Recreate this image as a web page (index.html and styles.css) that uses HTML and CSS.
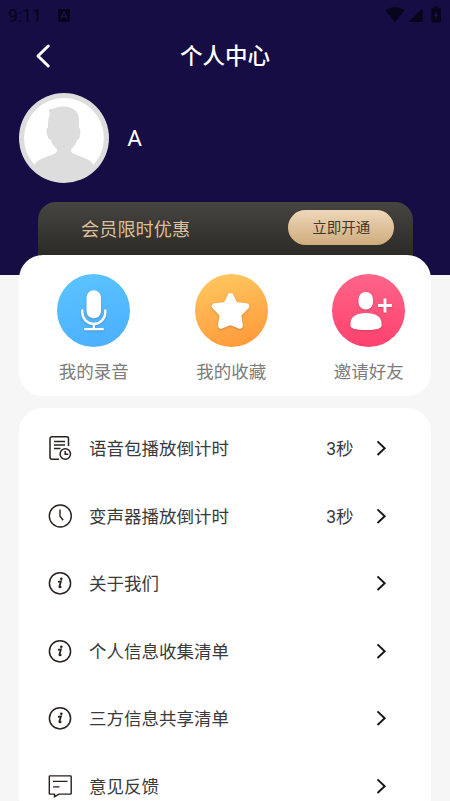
FILE: index.html
```html
<!DOCTYPE html>
<html lang="zh-CN">
<head>
<meta charset="utf-8">
<meta name="viewport" content="width=device-width, initial-scale=1">
<title>个人中心</title>
<link rel="stylesheet" href="styles.css">
</head>
<body>
<svg class="defs" width="0" height="0" aria-hidden="true">
  <defs>
    <symbol id="chevron" viewBox="0 0 12 18"><path d="M1.500 2.400 8.700 9.200l-7.200 6.800" fill="none" stroke="#161616" stroke-width="1.900"/></symbol>
    <symbol id="info" viewBox="0 0 24 24">
      <g fill="none" stroke="#2b2020"><circle cx="12" cy="12.300" r="10.600" stroke-width="1.500"/>
      <path d="M10 10.900l2.900-.5-1.500 5.100c-.2 1.200.7 1 1.900-.2" stroke-width="1.800"/></g>
      <circle cx="13.300" cy="7.700" r="1.300" fill="#2b2020"/>
    </symbol>
  </defs>
</svg>
<div class="screen">
  <header class="hero">
    <div class="status">
      <span class="time">9:11</span>
      <svg class="app-icon" width="12" height="13" viewBox="0 0 12 13"><rect width="12" height="13" rx="1" fill="#06051b"/><path d="M3 9.500 6 3l3 6.500M4 7.500h4" fill="none" stroke="#19124a" stroke-width="1.500"/></svg>
      <svg class="signals" width="58" height="18" viewBox="0 0 58 18" fill="#06051b">
        <path d="M.5 4.500C5.500 .2 14.500 .2 19.500 4.500L10 16z"/>
        <path d="M37.500 2.500V16H23.500z"/>
        <path d="M46.500 3.200q0-1 1-1h2V.5h3.400v1.700h2q1 0 1 1V15.500q0 1-1 1h-7.400q-1 0-1-1z"/>
        <path d="M52 4.500l-3.500 5.500h2.200l-.7 4 3.500-5.500h-2.200z" fill="#19124a"/>
      </svg>
    </div>
    <div class="navbar">
      <svg class="back" width="18" height="26" viewBox="0 0 18 26"><path d="M14.200 3 4 13l10.200 10" fill="none" stroke="#fff" stroke-width="3" stroke-linecap="round" stroke-linejoin="round"/></svg>
      <h1>个人中心</h1>
    </div>
    <div class="profile">
      <svg width="90" height="90" viewBox="0 0 90 90">
        <circle cx="45" cy="45" r="45" fill="#ddd"/>
        <circle cx="45" cy="45" r="40" fill="#fff"/>
        <path d="M31 20.500q-2-2-.5-4.500c4 .3 6-2.600 14-2.600C54.500 13.400 60 19 60 26.500V35q1.500.3 1.300 4c-.3 5-1.200 7.500-2.800 7.800-1.500 4-3.500 6.700-6.300 9.200v2.500C54 63 70 63.500 74.800 72L68 83.500 45 89 22 83.500 15.200 72C20 63.500 36 63 37.800 58.500V56c-2.800-2.500-4.800-5.200-6.300-9.200-1.600-.3-3.200-2.800-4-7.800-.4-3.500.6-4 1.500-4-.2-5 .2-10.500 2-14.500z" fill="#ddd"/>
      </svg>
      <span class="name">A</span>
    </div>
    <div class="vip">
      <span class="vip-text">会员限时优惠</span>
      <button class="vip-button" type="button">立即开通</button>
    </div>
  </header>
  <main>
    <section class="card shortcuts">
      <a class="shortcut">
        <span class="disc blue"><svg width="73" height="73" viewBox="0 0 73 73">
          <rect x="29.500" y="16.300" width="14.500" height="28" rx="7.250" fill="#fff"/>
          <path d="M25.300 36.500v2a11.500 11.500 0 0 0 23 0v-2M36.800 50v5M28 55.200h17.800" fill="none" stroke="#fff" stroke-width="2.300" stroke-linecap="round"/>
        </svg></span>
        <span class="label">我的录音</span>
      </a>
      <a class="shortcut">
        <span class="disc orange"><svg width="73" height="73" viewBox="0 0 73 73">
          <path d="M35.500 22 40 31 51.200 32.300 43.200 40.500 44.800 51.700 35.500 48 26 51.700 27.600 40.500 19.800 32.300 31 31z" fill="#fff" stroke="#fff" stroke-width="6" stroke-linejoin="round"/>
        </svg></span>
        <span class="label">我的收藏</span>
      </a>
      <a class="shortcut">
        <span class="disc pink"><svg width="73" height="73" viewBox="0 0 73 73" fill="#fff">
          <rect x="26.500" y="18" width="14.500" height="17.500" rx="7.200"/>
          <path d="M18.500 49.500c0-7 6-10.500 15.500-10.500S49.500 42.500 49.500 49.500v2c0 3-5 4.500-15.500 4.500s-15.500-1.500-15.500-4.500z"/>
          <path d="M46 31.500h14M53 24.500v14" stroke="#fff" stroke-width="2.900"/>
        </svg></span>
        <span class="label">邀请好友</span>
      </a>
    </section>
    <nav class="card menu">
      <a class="row">
        <svg class="icon" viewBox="0 0 24 24" fill="none" stroke="#2b2020" stroke-width="1.500">
          <path d="M11 23.200H4Q2 23.200 2 21.200V2.500Q2 .8 4 .8h14.500q2 0 2 1.700V10M6 5.500h11M6 9h11M6 12.500h6.500"/>
          <circle cx="17.300" cy="18" r="5.200"/><path d="M17.200 15v3.200h3"/>
        </svg>
        <span class="text">语音包播放倒计时</span><span class="value">3秒</span><svg class="chevron"><use href="#chevron"/></svg>
      </a>
      <a class="row">
        <svg class="icon" viewBox="0 0 24 24" fill="none" stroke="#2b2020" stroke-width="1.400"><circle cx="12.300" cy="12" r="11"/><path d="M12 5.500v6.800l3.200 4"/></svg>
        <span class="text">变声器播放倒计时</span><span class="value">3秒</span><svg class="chevron"><use href="#chevron"/></svg>
      </a>
      <a class="row">
        <svg class="icon"><use href="#info"/></svg>
        <span class="text">关于我们</span><svg class="chevron"><use href="#chevron"/></svg>
      </a>
      <a class="row">
        <svg class="icon"><use href="#info"/></svg>
        <span class="text">个人信息收集清单</span><svg class="chevron"><use href="#chevron"/></svg>
      </a>
      <a class="row">
        <svg class="icon"><use href="#info"/></svg>
        <span class="text">三方信息共享清单</span><svg class="chevron"><use href="#chevron"/></svg>
      </a>
      <a class="row">
        <svg class="icon" viewBox="0 0 24 24" fill="none" stroke="#2b2020" stroke-width="1.400"><path d="M2 1.900h20.500q.7 0 .7.700V19.400q0 .7-.7.700H11L6.500 22.700V20.100H2q-.7 0-.7-.7V2.600Q1.300 1.900 2 1.900zM5 7.400h14.500M5 12.900h6.500"/></svg>
        <span class="text">意见反馈</span><svg class="chevron"><use href="#chevron"/></svg>
      </a>
    </nav>
  </main>
</div>
</body>
</html>
```
FILE: styles.css
```css
* { box-sizing: border-box; }
body {
  margin: 0;
  background: #f6f6f6;
  font-family: Roboto, "Noto Sans CJK SC", sans-serif;
  color: #3a3a3a;
}
.defs { position: absolute; }
.screen { height: 801px; overflow: hidden; }
.hero { height: 275px; background: #150d43; }
.status { display: flex; align-items: center; height: 30px; padding: 0 7px 0 8px; }
.time { width: 50px; font-size: 17.500px; line-height: 30px; padding-top: 1px; color: #06051b; }
.signals { margin-left: auto; }
.navbar {
  display: grid;
  grid-template-columns: 36px 1fr 36px;
  align-items: center;
  height: 50px;
  padding: 0 34px;
}
h1 { margin: 0; padding-top: 1px; font-size: 22.500px; font-weight: 500; line-height: 50px; color: #fff; text-align: center; }
.profile { display: flex; align-items: center; gap: 18.500px; height: 90px; margin: 12.700px 0 0 18.800px; }
.name { font-size: 22.500px; color: #fff; }
.vip {
  display: flex;
  align-items: center;
  justify-content: space-between;
  height: 73px;
  margin: 19.300px 37.500px 0;
  padding: 0 18.300px 21px 43.500px;
  border-radius: 18px 18px 0 0;
  background: linear-gradient(#464540, #2b2a27 54px);
}
.vip-text { padding-top: 4px; font-size: 18.200px; line-height: 26px; color: #dcbf99; }
.vip-button {
  width: 106px;
  height: 35px;
  padding: 3px 0 0;
  border: 0;
  border-radius: 18px;
  background: linear-gradient(#eed7ba, #cfac7c);
  font: 14.500px/32px Roboto, "Noto Sans CJK SC", sans-serif;
  color: #3d372d;
}
main { position: relative; margin: -20px 19px 0; }
.card { border-radius: 24px; background: #fff; }
.shortcuts { display: flex; justify-content: space-between; height: 141px; padding: 19px 26px 0 38px; }
.shortcut { display: flex; flex-direction: column; align-items: center; width: 73px; }
.disc { height: 73px; border-radius: 50%; }
.disc svg { display: block; filter: drop-shadow(0 1px 1px rgb(80 40 40 / 25%)); }
.blue { background: linear-gradient(165deg, #5bc5ff, #4baeff); }
.orange { background: linear-gradient(165deg, #ffca61, #ff9638); }
.pink { background: linear-gradient(#ff6589, #ff416e); }
.label { margin-top: 12px; padding-left: .5px; font-size: 17.500px; line-height: 26px; color: #7c7c7c; white-space: nowrap; }
.menu { margin-top: 12px; padding-top: 6.500px; }
.row { display: flex; align-items: center; height: 67.500px; padding: 0 43px 0 29px; }
.icon { flex: none; width: 24px; height: 24px; margin-right: 17px; }
.text, .value { padding-top: 2px; font-size: 17.500px; line-height: 26px; }
.text { flex: 1; }
.value { margin-right: 22.500px; }
.chevron { width: 12px; height: 18px; }
```
